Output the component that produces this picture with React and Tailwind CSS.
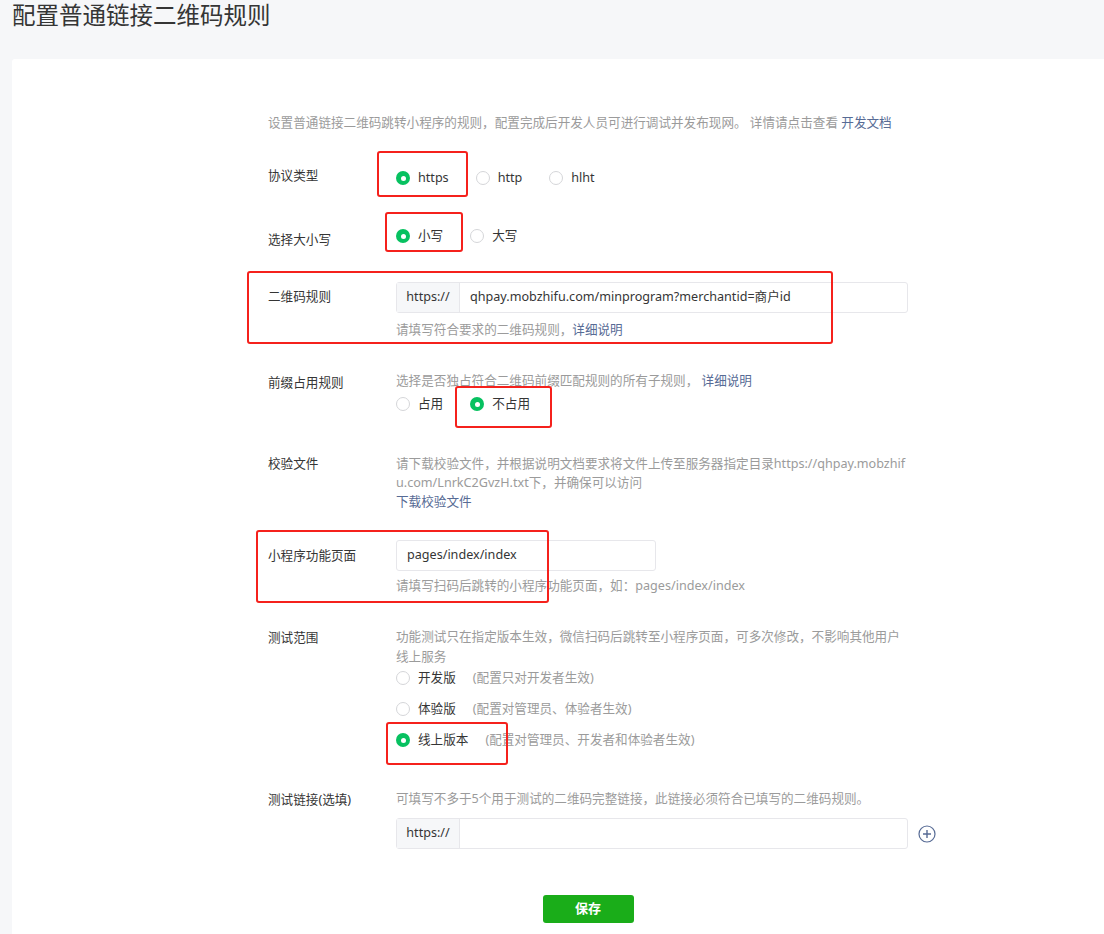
import React from "react";

const Radio = ({ checked, children, extra }) => (
  <label className="flex items-center h-5">
    {checked ? (
      <span className="w-[14px] h-[14px] rounded-full bg-[#07c160] flex items-center justify-center shrink-0">
        <span className="w-[5px] h-[5px] rounded-full bg-white" />
      </span>
    ) : (
      <span className="w-[14px] h-[14px] rounded-full border border-[#d5d6d9] bg-white shrink-0" />
    )}
    <span className="ml-2 text-[#353535]">{children}</span>
    {extra && <span className="ml-[17px] text-[#9b9b9b]">{extra}</span>}
  </label>
);

const Row = ({ label, labelPad, className = "", children }) => (
  <div className={"flex items-start " + className}>
    <div className={"w-[128px] shrink-0 leading-5 text-[#353535] " + labelPad}>{label}</div>
    <div className="w-[512px]">{children}</div>
  </div>
);

const Mark = ({ className }) => (
  <div className={"absolute border-2 border-[#f5211c] rounded-[3px] " + className} />
);

export default function App() {
  return (
    <div className="relative min-h-[934px] bg-[#f6f7f9] text-[12.6px] font-['Noto_Sans','Noto_Sans_CJK_SC',sans-serif] overflow-hidden">
      <h1 className="pl-3 text-[23.5px] leading-[30px] text-[#353535]">配置普通链接二维码规则</h1>

      <div className="ml-3 mt-[29px] min-h-[875px] bg-white rounded-tl-[3px] pt-[54px] pl-[256px] pb-10">
        <div className="w-[640px]">
          <p className="leading-5 text-[#9b9b9b] whitespace-nowrap">
            设置普通链接二维码跳转小程序的规则，配置完成后开发人员可进行调试并发布现网。 详情请点击查看{" "}
            <span className="text-[#576b95]">开发文档</span>
          </p>

          <Row label="协议类型" className="mt-[33px]">
            <div className="flex items-center pt-[2px] gap-[27px]">
              <Radio checked>https</Radio>
              <Radio>http</Radio>
              <Radio>hlht</Radio>
            </div>
          </Row>

          <Row label="选择大小写" labelPad="pt-[4px]" className="mt-[38px]">
            <div className="flex items-center gap-[27px]">
              <Radio checked>小写</Radio>
              <Radio>大写</Radio>
            </div>
          </Row>

          <Row label="二维码规则" labelPad="pt-[5px]" className="mt-[32px]">
            <div className="flex h-[31px] border border-[#e7e7eb] rounded-[3px]">
              <div className="w-[63px] shrink-0 flex items-center justify-center bg-[#f6f7f9] border-r border-[#e7e7eb] text-[#353535]">
                https://
              </div>
              <div className="flex items-center pl-[10px] text-[#353535]">
                qhpay.mobzhifu.com/minprogram?merchantid=商户id
              </div>
            </div>
            <p className="mt-[7px] leading-5 text-[#9b9b9b]">
              请填写符合要求的二维码规则，<span className="text-[#576b95]">详细说明</span>
            </p>
          </Row>

          <Row label="前缀占用规则" labelPad="pt-[2px]" className="mt-[31px]">
            <p className="leading-5 text-[#9b9b9b]">
              选择是否独占符合二维码前缀匹配规则的所有子规则， <span className="text-[#576b95]">详细说明</span>
            </p>
            <div className="mt-[3px] flex items-center gap-[27px]">
              <Radio>占用</Radio>
              <Radio checked>不占用</Radio>
            </div>
          </Row>

          <Row label="校验文件" className="mt-[40px]">
            <p className="leading-[19px] text-[#9b9b9b] break-all">
              请下载校验文件，并根据说明文档要求将文件上传至服务器指定目录https://qhpay.mobzhifu.com/LnrkC2GvzH.txt下，并确保可以访问
            </p>
            <p className="leading-[19px] text-[#576b95]">下载校验文件</p>
          </Row>

          <Row label="小程序功能页面" labelPad="pt-[6px]" className="mt-[29px]">
            <div className="w-[260px] h-[31px] border border-[#e7e7eb] rounded-[3px] flex items-center pl-[10px] text-[#353535]">
              pages/index/index
            </div>
            <p className="mt-[5px] leading-5 text-[#9b9b9b]">
              请填写扫码后跳转的小程序功能页面，如：pages/index/index
            </p>
          </Row>

          <Row label="测试范围" labelPad="pt-[1px]" className="mt-[31px]">
            <p className="leading-5 text-[#9b9b9b]">
              功能测试只在指定版本生效，微信扫码后跳转至小程序页面，可多次修改，不影响其他用户线上服务
            </p>
            <div className="mt-px flex flex-col gap-[11px]">
              <Radio extra="(配置只对开发者生效)">开发版</Radio>
              <Radio extra="(配置对管理员、体验者生效)">体验版</Radio>
              <Radio checked extra="(配置对管理员、开发者和体验者生效)">线上版本</Radio>
            </div>
          </Row>

          <Row label="测试链接(选填)" labelPad="pt-[1px]" className="mt-[39px]">
            <p className="leading-5 text-[#9b9b9b] whitespace-nowrap">
              可填写不多于5个用于测试的二维码完整链接，此链接必须符合已填写的二维码规则。
            </p>
            <div className="mt-[9px] flex items-center">
              <div className="w-[512px] shrink-0 flex h-[31px] border border-[#e7e7eb] rounded-[3px]">
                <div className="w-[63px] shrink-0 flex items-center justify-center bg-[#f6f7f9] border-r border-[#e7e7eb] text-[#353535]">
                  https://
                </div>
                <div className="flex-1" />
              </div>
              <svg className="ml-[10px] shrink-0" width="18" height="18" viewBox="0 0 18 18">
                <circle cx="9" cy="9" r="8" fill="none" stroke="#576b95" strokeWidth="1.2" />
                <path d="M9 5v8M5 9h8" stroke="#576b95" strokeWidth="1.4" />
              </svg>
            </div>
          </Row>

          <div className="mt-[46px] flex justify-center">
            <button className="w-[91px] h-[28px] rounded-[3px] bg-[#1aad19] text-white font-bold text-[13px]">
              保存
            </button>
          </div>
        </div>
      </div>

      <Mark className="left-[377px] top-[151px] w-[91px] h-[46px]" />
      <Mark className="left-[385px] top-[212px] w-[78px] h-[40px]" />
      <Mark className="left-[247px] top-[271px] w-[586px] h-[73px]" />
      <Mark className="left-[455px] top-[386px] w-[97px] h-[42px]" />
      <Mark className="left-[256px] top-[530px] w-[293px] h-[73px]" />
      <Mark className="left-[386px] top-[722px] w-[122px] h-[43px]" />
    </div>
  );
}
